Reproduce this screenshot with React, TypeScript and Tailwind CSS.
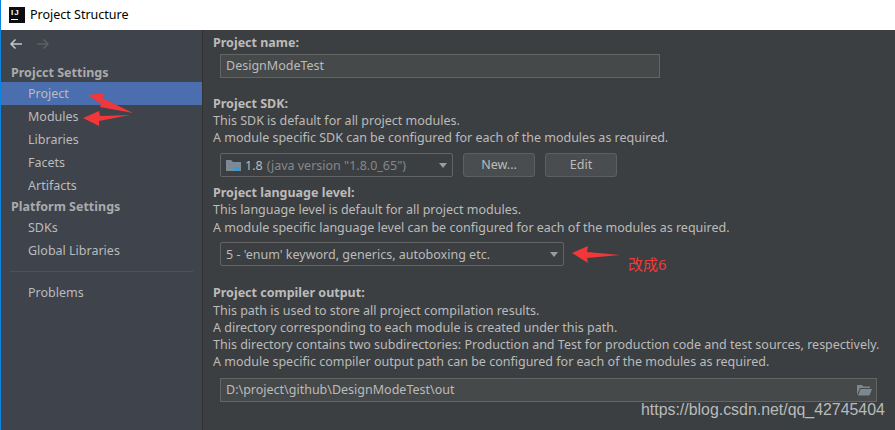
import React from "react";

const font = { fontFamily: '"Noto Sans", "Noto Sans CJK SC", sans-serif' };

function NavItem({ label, active }: { label: string; active?: boolean }) {
  return (
    <div className={`h-[23px] pl-[27px] leading-[24px] text-[12.5px] ${active ? "bg-[#4b6eaf]" : ""}`}>{label}</div>
  );
}

function Combo({ width, children }: { width: string; children: React.ReactNode }) {
  return (
    <div className={`${width} h-[24px] border border-[#646464] rounded-[2px] flex items-center pl-[5px] pr-[5px] text-[12.5px]`}>
      <div className="flex-1 flex items-center gap-[2px] whitespace-nowrap">{children}</div>
      <div className="w-0 h-0 border-l-[4.5px] border-r-[4.5px] border-t-[5px] border-l-transparent border-r-transparent border-t-[#9a9da0]"></div>
    </div>
  );
}

function Red({ points }: { points: string }) {
  return <polygon points={points} fill="#f1373a" />;
}

export default function App() {
  return (
    <div style={font} className="relative w-[895px] h-[430px] overflow-hidden bg-[#3c3f41] text-[#bbbbbb]">
      <div className="h-[30px] bg-white border-l border-[#0a84e0] flex items-center pl-[8px] gap-[5px] text-black text-[12.5px]">
        <div className="w-[16px] h-[16px] bg-[#0b0d10] text-white text-[8px] font-bold font-['Liberation_Sans'] tracking-[1px] leading-[9px] pl-[2px] pt-[1px]">
          IJ
          <div className="w-[7px] h-[1px] bg-white mt-[2px]"></div>
        </div>
        <span>Project Structure</span>
      </div>
      <div className="flex h-[400px]">
        <div className="w-[202px] shrink-0 bg-[#3e434c] border-l border-[#0a84e0]">
          <div className="h-[28px] flex items-center pl-[8px] gap-[13px]">
            <svg width="14" height="12" viewBox="0 0 14 12" fill="none" stroke="#c4c6c8" strokeWidth="1.5">
              <path d="M13 6H2M6.5 1.5 2 6l4.5 4.5" />
            </svg>
            <svg width="14" height="12" viewBox="0 0 14 12" fill="none" stroke="#5c5f62" strokeWidth="1.5">
              <path d="M1 6h11M7.5 1.5 12 6l-4.5 4.5" />
            </svg>
          </div>
          <div className="pl-[10px] mt-[6px] h-[18px] leading-[17px] text-[12.5px] font-bold text-[#a9abad]">Projcct Settings</div>
          <NavItem label="Project" active />
          <NavItem label="Modules" />
          <NavItem label="Libraries" />
          <NavItem label="Facets" />
          <NavItem label="Artifacts" />
          <div className="pl-[10px] h-[19px] leading-[20px] text-[12.5px] font-bold text-[#a9abad]">Platform Settings</div>
          <NavItem label="SDKs" />
          <NavItem label="Global Libraries" />
          <div className="mx-[9px] mt-[9px] mb-[9px] h-px bg-[#505254]"></div>
          <NavItem label="Problems" />
        </div>
        <div className="flex-1 border-l border-[#323232] pl-[10px] pt-[4px] text-[12.5px] leading-[17px] whitespace-nowrap">
          <div className="font-bold">Project name:</div>
          <div className="ml-[7px] mt-[3px] w-[440px] h-[24px] border border-[#646464] bg-[#45494a] pl-[5px] leading-[22px]">DesignModeTest</div>
          <div className="mt-[17px] font-bold">Project SDK:</div>
          <div>This SDK is default for all project modules.</div>
          <div>A module specific SDK can be configured for each of the modules as required.</div>
          <div className="ml-[7px] mt-[7px] flex gap-[10px] items-center">
            <Combo width="w-[233px]">
              <svg width="16" height="14" viewBox="0 0 16 14" className="mr-[1px]">
                <path d="M0 2h5l2 2h8v9H0z" fill="#7d8a96" />
                <path d="M8 9h6v2.5a1.5 1.5 0 0 1-1.5 1.5h-3A1.5 1.5 0 0 1 8 11.5z" fill="#3d9ad1" />
              </svg>
              <span>1.8</span>
              <span className="text-[#85888a] ml-[2px]">(java version "1.8.0_65")</span>
            </Combo>
            <div className="w-[72px] h-[24px] border border-[#5e6060] rounded-[3px] bg-[#4a4d4f] text-center leading-[22px]">New...</div>
            <div className="w-[72px] h-[24px] border border-[#5e6060] rounded-[3px] bg-[#4a4d4f] text-center leading-[22px]">Edit</div>
          </div>
          <div className="mt-[7px] font-bold">Project language level:</div>
          <div>This language level is default for all project modules.</div>
          <div className="mt-px">A module specific language level can be configured for each of the modules as required.</div>
          <div className="ml-[7px] mt-[6px]">
            <Combo width="w-[344px]">5 - 'enum' keyword, generics, autoboxing etc.</Combo>
          </div>
          <div className="mt-[18px] h-[18px] font-bold">Project compiler output:</div>
          <div>This path is used to store all project compilation results.</div>
          <div>A directory corresponding to each module is created under this path.</div>
          <div>This directory contains two subdirectories: Production and Test for production code and test sources, respectively.</div>
          <div>A module specific compiler output path can be configured for each of the modules as required.</div>
          <div className="ml-[7px] mt-[8px] w-[657px] h-[24px] border border-[#646464] bg-[#45494a] pl-[5px] pr-[4px] leading-[22px] flex items-center justify-between">
            <span>D:\project\github\DesignModeTest\out</span>
            <svg width="15" height="12" viewBox="0 0 15 12">
              <path d="M0 1h5l1.5 1.5H13V4H3L0 11z" fill="#7b8890" />
              <path d="M3.5 5H15l-2.5 6.5H1z" fill="#7b8890" />
            </svg>
          </div>
        </div>
      </div>
      <svg className="absolute left-0 top-0 pointer-events-none" width="895" height="430">
        <Red points="88,95 105,93 102,98 133,113 100,107 101,104" />
        <Red points="83,118 99,111 100,116 130,115 99,121 99,126" />
        <Red points="572,253 588,246 587,252 620,255 587,258 588,263" />
      </svg>
      <span className="absolute left-[628px] top-[254px] text-[15px] leading-[20px] text-[#f13a3a]">改成6</span>
      <span className="absolute left-[641px] top-[401px] text-[15.9px] leading-[18px] text-[#b8bbbb]" style={{ fontFamily: '"Liberation Sans", sans-serif' }}>
        https://blog.csdn.net/qq_42745404
      </span>
    </div>
  );
}
